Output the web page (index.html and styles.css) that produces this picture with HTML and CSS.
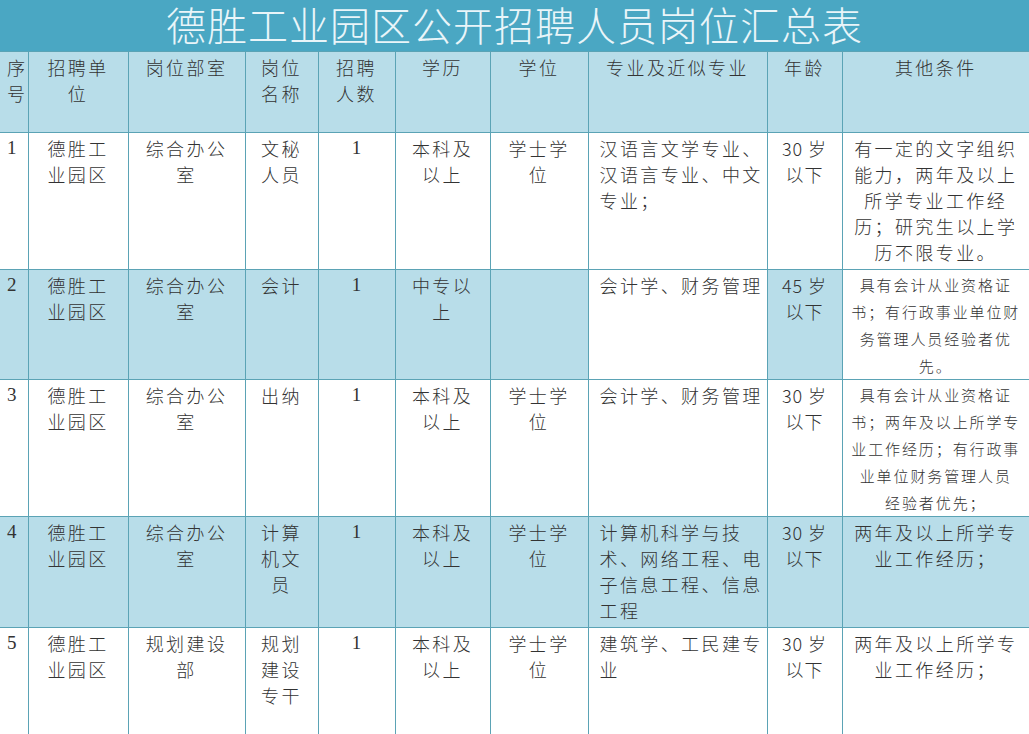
FILE: index.html
```html
<!DOCTYPE html>
<html lang="zh-CN">
<head>
<meta charset="utf-8">
<title>德胜工业园区公开招聘人员岗位汇总表</title>
<link rel="stylesheet" href="styles.css">
</head>
<body>
<div class="sheet">
  <div class="title">德胜工业园区公开招聘人员岗位汇总表</div>
  <table class="grid">
    <colgroup>
      <col class="c1"><col class="c2"><col class="c3"><col class="c4"><col class="c5"><col class="c6"><col class="c7"><col class="c8"><col class="c9"><col class="c10">
    </colgroup>
    <tr class="head blue">
      <td class="num">序<br>号</td>
      <td>招聘单<br>位</td>
      <td>岗位部室</td>
      <td>岗位<br>名称</td>
      <td>招聘<br>人数</td>
      <td>学历</td>
      <td>学位</td>
      <td>专业及近似专业</td>
      <td>年龄</td>
      <td>其他条件</td>
    </tr>
    <tr class="r1">
      <td class="num digit">1</td>
      <td>德胜工<br>业园区</td>
      <td>综合办公<br>室</td>
      <td>文秘<br>人员</td>
      <td class="digit">1</td>
      <td>本科及<br>以上</td>
      <td>学士学<br>位</td>
      <td class="major">汉语言文学专业、<br>汉语言专业、中文<br>专业；</td>
      <td class="age">30 岁<br>以下</td>
      <td>有一定的文字组织<br>能力，两年及以上<br>所学专业工作经<br>历；研究生以上学<br>历不限专业。</td>
    </tr>
    <tr class="r2">
      <td class="num digit blue">2</td>
      <td class="blue">德胜工<br>业园区</td>
      <td class="blue">综合办公<br>室</td>
      <td class="blue">会计</td>
      <td class="digit blue">1</td>
      <td class="blue">中专以<br>上</td>
      <td class="blue"></td>
      <td class="major">会计学、财务管理</td>
      <td class="age blue">45 岁<br>以下</td>
      <td class="small">具有会计从业资格证<br>书；有行政事业单位财<br>务管理人员经验者优<br>先。</td>
    </tr>
    <tr class="r3">
      <td class="num digit">3</td>
      <td>德胜工<br>业园区</td>
      <td>综合办公<br>室</td>
      <td>出纳</td>
      <td class="digit">1</td>
      <td>本科及<br>以上</td>
      <td>学士学<br>位</td>
      <td class="major">会计学、财务管理</td>
      <td class="age">30 岁<br>以下</td>
      <td class="small">具有会计从业资格证<br>书；两年及以上所学专<br>业工作经历；有行政事<br>业单位财务管理人员<br>经验者优先；</td>
    </tr>
    <tr class="r4 blue">
      <td class="num digit">4</td>
      <td>德胜工<br>业园区</td>
      <td>综合办公<br>室</td>
      <td>计算<br>机文<br>员</td>
      <td class="digit">1</td>
      <td>本科及<br>以上</td>
      <td>学士学<br>位</td>
      <td class="major">计算机科学与技<br>术、网络工程、电<br>子信息工程、信息<br>工程</td>
      <td class="age">30 岁<br>以下</td>
      <td>两年及以上所学专<br>业工作经历；</td>
    </tr>
    <tr class="r5">
      <td class="num digit">5</td>
      <td>德胜工<br>业园区</td>
      <td>规划建设<br>部</td>
      <td>规划<br>建设<br>专干</td>
      <td class="digit">1</td>
      <td>本科及<br>以上</td>
      <td>学士学<br>位</td>
      <td class="major">建筑学、工民建专<br>业</td>
      <td class="age">30 岁<br>以下</td>
      <td>两年及以上所学专<br>业工作经历；</td>
    </tr>
  </table>
</div>
</body>
</html>
```

FILE: styles.css
```css
html, body {
  margin: 0;
  padding: 0;
  background: #ffffff;
}

.sheet {
  width: 1029px;
  height: 734px;
  overflow: hidden;
  font-family: "Noto Sans CJK SC", "Liberation Sans", sans-serif;
  color: #333333;
}

.title {
  height: 51px;
  background: #4aa7c3;
  color: #e9f5f9;
  font-size: 40px;
  line-height: 48px;
  font-weight: 300;
  text-align: center;
  letter-spacing: 1px;
}

.grid {
  width: 1029px;
  border-collapse: collapse;
  table-layout: fixed;
}

.c1 { width: 28px; }
.c2 { width: 100px; }
.c3 { width: 117px; }
.c4 { width: 73px; }
.c5 { width: 77px; }
.c6 { width: 95px; }
.c7 { width: 98px; }
.c8 { width: 179px; }
.c9 { width: 75px; }
.c10 { width: 187px; }

.grid td {
  border: 1px solid #5ba3b5;
  vertical-align: top;
  text-align: center;
  font-size: 18px;
  font-weight: 300;
  line-height: 26px;
  letter-spacing: 2.4px;
  padding: 2px 0 0 0;
  white-space: nowrap;
  overflow: hidden;
}

.grid tr td:first-child { border-left: none; }
.grid tr td:last-child { border-right: none; }

.blue td, td.blue {
  background: #b8dde9;
}

.head td { height: 78px; }
.r1 td { height: 134px; }
.r2 td { height: 107px; }
.r3 td { height: 134px; }
.r4 td { height: 108px; }
.r5 td { height: 120px; }

.grid td.num {
  text-align: left;
  padding-left: 7px;
  letter-spacing: 0;
}

.grid td.digit {
  font-family: "Liberation Serif", serif;
  font-size: 19px;
  font-weight: 400;
  letter-spacing: 0;
}

.grid td.major {
  text-align: left;
  padding-left: 11px;
}

.grid td.age {
  letter-spacing: 1px;
}

.grid td.small {
  font-size: 15px;
  line-height: 27px;
  letter-spacing: 1.9px;
  padding-top: 1px;
}
```
